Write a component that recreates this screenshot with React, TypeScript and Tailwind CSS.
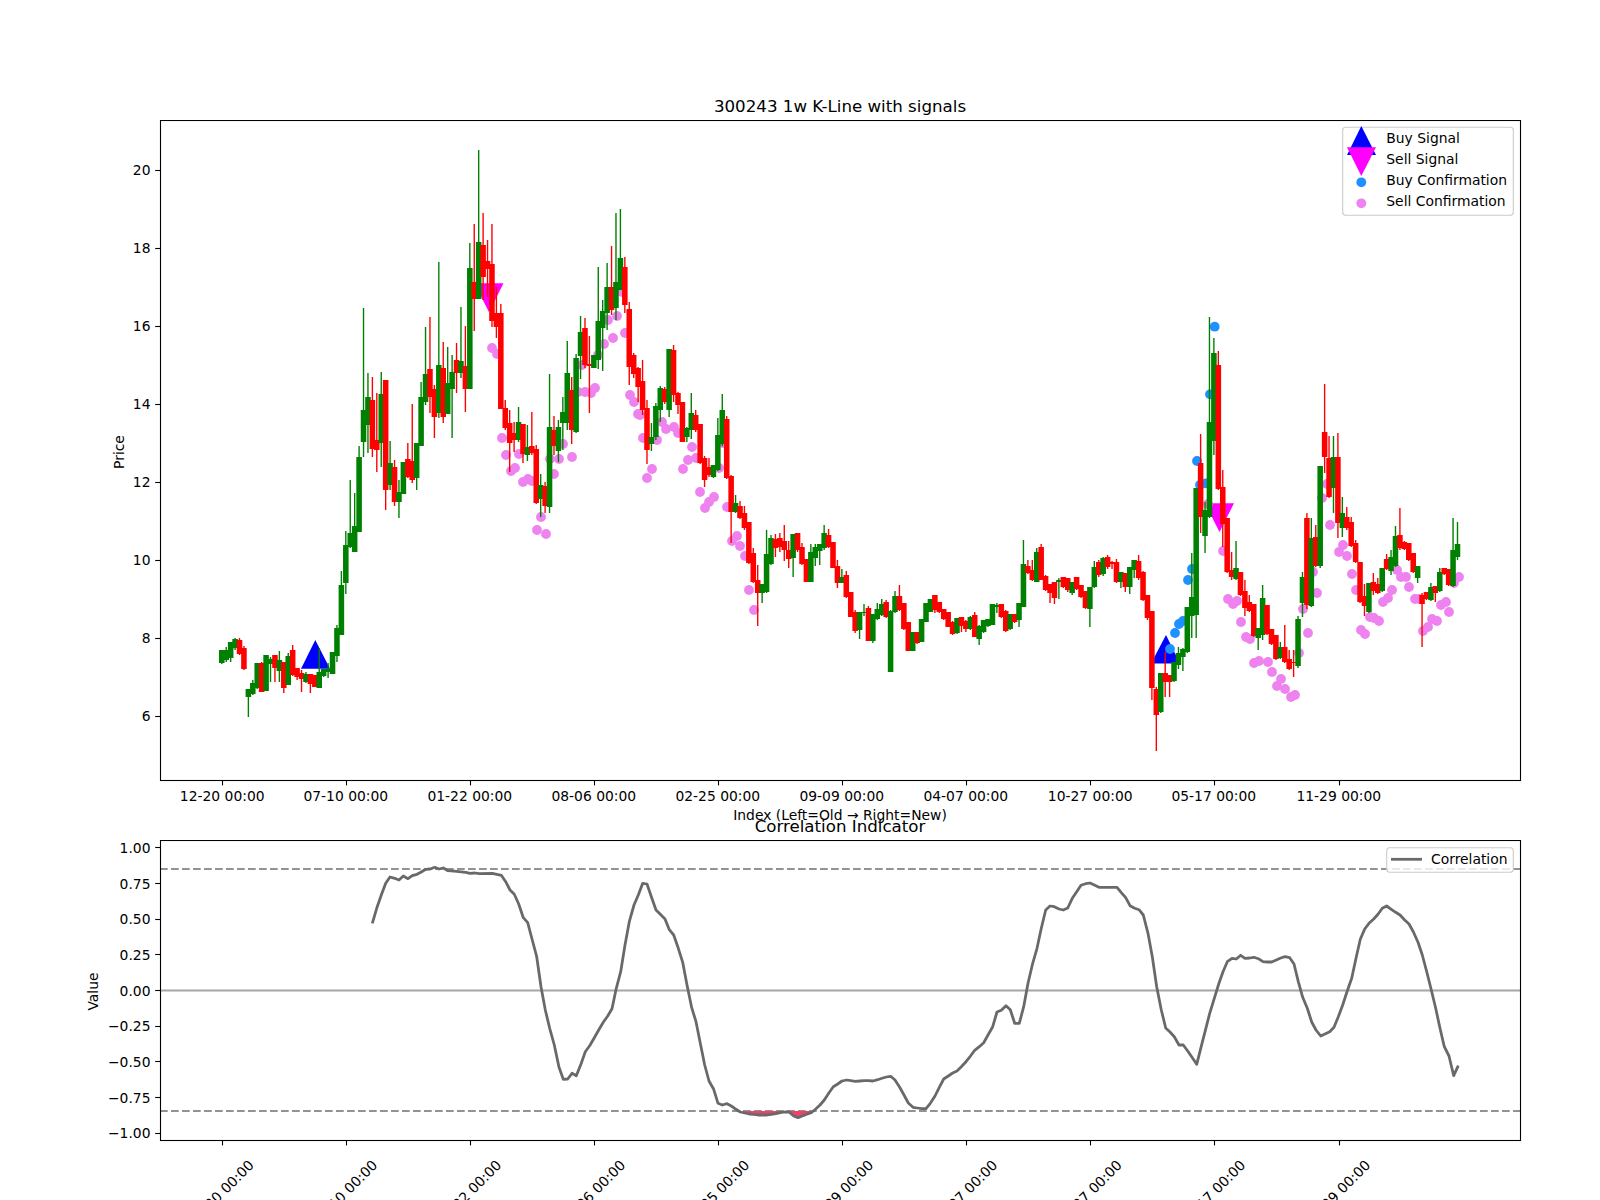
const xAt = (i: number) => 221.8 + 4.429 * i;
const snap = (v: number) => Math.floor(v) + 0.5;

const TICKS = [
  ['12-20 00:00', 222.7], ['07-10 00:00', 346.3], ['01-22 00:00', 470.3], ['08-06 00:00', 594.3], ['02-25 00:00', 718.3],
  ['09-09 00:00', 842.3], ['04-07 00:00', 966.3], ['10-27 00:00', 1090.7], ['05-17 00:00', 1214.3], ['11-29 00:00', 1339.3],
] as const;

const PRICE_TICKS = [[20, 170.3], [18, 248.3], [16, 326.3], [14, 404.3], [12, 482.3], [10, 560.3], [8, 638.3], [6, 716.3]] as const;
const VALUE_TICKS = [['1.00', 847.7], ['0.75', 883.5], ['0.50', 919.2], ['0.25', 954.9], ['0.00', 990.5], ['−0.25', 1026.2], ['−0.50', 1061.9], ['−0.75', 1097.6], ['−1.00', 1133.3]] as const;

// color, wick top, body top, body bottom, wick bottom (page px)
type Candle = ['g' | 'r', number, number, number, number];
const CANDLES: Candle[] = [
  ['g',650,650,663,664],['g',647,650,660,662],['g',642,642,658,662],['g',638,639,648,650],['r',638,640,654,655],
  ['r',646,648,669,670],['g',689,689,697,717],['g',680,683,694,695],['g',663,663,688,689],['r',662,663,692,692],
  ['g',655,655,691,691],['g',657,659,664,682],['r',655,655,668,682],['g',651,660,671,682],['r',662,662,688,693],
  ['g',653,656,685,685],['r',645,650,675,676],['r',668,668,677,680],['r',670,673,679,692],['g',672,674,682,683],
  ['r',674,674,684,693],['r',675,675,687,687],['g',648,672,688,688],['g',669,669,676,677],['g',663,669,672,678],
  ['g',652,652,674,674],['g',625,628,656,662],['g',571,585,635,635],['g',531,545,583,594],['g',480,533,547,548],
  ['g',493,526,552,552],['g',446,457,532,532],['g',308,410,442,457],['g',373,397,425,453],['r',377,400,449,457],
  ['r',393,440,450,472],['g',372,394,443,467],['r',380,380,490,510],['g',441,463,485,490],['r',460,467,502,506],
  ['g',480,492,502,518],['g',462,462,494,494],['r',443,459,477,478],['r',404,461,480,483],['g',443,443,478,490],
  ['g',382,397,446,446],['g',327,374,402,405],['r',317,369,397,413],['r',385,389,417,438],['g',262,365,413,418],
  ['r',342,368,417,423],['g',347,383,414,414],['g',355,372,389,438],['r',343,360,373,393],['g',307,361,373,378],
  ['r',326,366,389,412],['g',243,268,389,389],['r',224,282,299,331],['g',150,242,299,299],['r',213,245,277,300],
  ['r',240,261,269,297],['r',224,264,321,327],['r',287,313,327,338],['r',304,313,409,409],['r',400,408,428,430],
  ['r',410,423,443,472],['r',422,433,440,452],['g',407,422,440,442],['r',424,424,454,463],['g',425,447,455,461],
  ['r',412,446,453,455],['r',445,449,503,504],['g',474,485,499,517],['r',482,486,506,513],['g',374,427,507,513],
  ['r',416,430,446,455],['g',420,427,451,462],['g',397,412,423,450],['g',341,373,423,430],['r',377,390,430,444],
  ['g',354,358,432,433],['g',316,332,356,379],['r',318,328,365,368],['r',336,364,366,413],['g',355,355,368,368],
  ['g',267,321,360,369],['g',300,311,328,371],['g',263,287,313,330],['r',246,287,310,315],['g',213,282,308,320],
  ['g',209,258,290,290],['r',257,267,305,313],['r',302,309,367,385],['r',353,355,374,378],['r',367,368,387,402],
  ['r',360,381,410,415],['r',400,408,450,464],['g',423,437,444,451],['g',403,406,437,440],['g',386,388,410,422],
  ['r',387,389,402,404],['g',349,349,410,417],['r',345,350,395,402],['r',392,393,405,414],['r',402,402,442,442],
  ['g',427,428,437,442],['g',393,413,430,439],['r',410,415,430,432],['r',424,424,463,464],['r',456,458,480,487],
  ['r',458,467,475,477],['g',465,465,477,478],['g',418,435,470,471],['g',394,410,444,446],['r',416,419,478,479],
  ['r',475,476,512,543],['g',495,503,512,513],['r',501,506,518,519],['r',506,513,528,530],['r',522,522,563,564],
  ['r',548,553,582,583],['r',565,580,593,626],['g',584,584,593,603],['g',530,554,592,593],['g',535,538,564,565],
  ['r',534,539,548,557],['r',533,538,547,552],['r',525,541,550,561],['r',541,550,559,568],['g',534,534,558,577],
  ['r',533,533,550,552],['r',543,547,564,565],['r',559,559,582,582],['g',544,552,582,582],['g',544,547,558,566],
  ['g',544,544,551,565],['g',525,533,548,550],['r',529,535,547,548],['r',542,542,568,568],['r',560,566,583,588],
  ['g',569,577,583,583],['r',571,575,597,598],['r',592,592,617,617],['r',610,612,631,633],['g',612,612,630,639],
  ['g',604,612,613,616],['r',606,608,641,641],['g',614,614,641,643],['g',603,609,619,620],['g',599,604,615,616],
  ['r',600,602,617,618],['g',610,611,672,672],['g',591,596,612,613],['r',585,596,610,611],['r',603,603,629,630],
  ['r',622,622,651,651],['g',632,632,651,651],['r',632,632,643,644],['g',619,619,642,642],['g',603,603,622,622],
  ['g',599,599,612,612],['r',595,595,610,613],['r',602,602,612,613],['r',609,609,619,620],['r',612,612,627,620],
  ['r',621,622,634,635],['g',618,618,633,634],['r',617,617,626,632],['r',620,621,629,632],['g',616,617,629,630],
  ['r',612,615,637,637],['g',625,626,639,645],['g',620,620,632,633],['g',619,619,626,627],['g',604,604,625,625],
  ['g',603,605,607,613],['r',604,604,617,618],['r',610,611,631,632],['g',614,614,629,630],['r',614,614,622,623],
  ['g',603,603,620,627],['g',540,564,607,607],['r',560,566,573,574],['r',560,570,580,581],['g',548,552,582,582],
  ['r',544,547,580,580],['r',575,576,590,591],['r',584,584,593,603],['r',582,582,598,604],['g',578,580,582,599],
  ['r',577,577,587,588],['r',578,578,590,592],['g',582,582,593,595],['r',577,577,589,590],['r',585,585,597,598],
  ['r',591,591,608,609],['g',587,587,609,627],['g',561,567,587,588],['r',560,562,575,577],['g',557,558,574,576],
  ['r',555,557,567,569],['r',561,562,564,569],['r',559,562,582,583],['g',572,572,582,588],['r',573,573,587,592],
  ['g',567,567,587,594],['g',560,560,570,578],['r',555,561,578,580],['r',571,572,600,601],['r',595,595,618,620],
  ['r',611,611,688,700],['r',687,689,715,751],['g',673,673,712,713],['r',652,673,682,697],['r',675,675,682,697],
  ['g',662,662,681,682],['g',647,653,665,669],['g',648,649,657,671],['g',607,607,652,653],['g',553,597,616,638],
  ['g',488,488,615,638],['r',434,463,517,533],['g',502,510,536,553],['g',317,422,517,518],['g',338,353,441,455],
  ['r',351,365,489,490],['r',470,487,524,547],['r',518,518,572,573],['r',552,570,577,580],['g',541,568,579,580],
  ['r',572,572,595,596],['r',580,591,608,616],['r',595,602,611,612],['r',604,604,636,637],['g',628,628,638,650],
  ['g',585,598,635,640],['r',605,605,634,635],['r',629,629,644,645],['r',635,635,659,660],['g',642,647,658,659],
  ['r',625,647,662,663],['r',650,659,669,670],['r',650,662,663,677],['g',616,619,666,668],['g',572,577,603,617],
  ['r',513,518,605,609],['g',518,538,606,607],['r',525,537,566,567],['g',466,466,566,568],['r',384,432,457,473],
  ['r',436,458,497,498],['g',436,457,488,513],['r',433,457,523,538],['g',497,513,528,537],['r',507,517,528,530],
  ['r',517,522,546,547],['r',540,543,562,563],['r',562,562,602,603],['r',584,596,606,616],['g',583,583,612,613],
  ['r',573,582,591,595],['r',578,584,593,594],['g',568,568,591,592],['r',554,559,569,570],['g',550,557,571,575],
  ['g',526,536,566,567],['r',508,535,548,550],['r',541,542,549,550],['r',543,543,560,561],['r',553,553,572,573],
  ['g',566,566,578,583],['r',593,595,604,647],['r',592,592,599,600],['g',583,587,600,601],['r',586,586,593,602],
  ['g',568,572,591,592],['r',568,568,574,575],['r',569,569,585,586],['g',518,550,586,587],['g',522,544,557,560],
];

// sell confirmation dots, page px
const SELL: [number, number][] = [
  [492,348],[497,354],[502,438],[506,455],[519,454],[511,471],[515,468],[523,482],[528,479],[532,481],
  [537,530],[546,534],[541,517],[550,459],[559,459],[563,444],[554,474],[572,457],
  [582,365],[578,392],[585,392],[591,393],[595,388],[598,355],[604,344],[608,320],[613,338],[617,316],[625,333],[622,292],
  [630,395],[634,402],[638,414],[643,438],[647,478],[652,469],[640,415],[657,440],[662,422],[666,429],
  [674,427],[678,433],[683,469],[688,460],[692,447],[696,458],[700,492],[705,508],[709,502],[714,497],
  [719,468],[723,443],[727,507],[732,541],[737,536],[740,546],[745,556],[749,590],[754,610],
  [1223,551],[1228,599],[1233,604],[1237,601],[1241,622],[1246,637],[1250,639],[1254,663],[1259,661],
  [1268,662],[1272,672],[1281,679],[1277,686],[1285,689],[1291,697],[1295,695],[1299,653],[1308,633],
  [1303,609],[1317,593],[1313,572],[1322,498],[1327,484],[1330,525],[1343,545],[1339,552],[1347,556],
  [1352,574],[1356,590],[1370,617],[1374,618],[1379,621],[1361,630],[1365,634],[1383,602],[1388,598],
  [1392,590],[1397,570],[1401,577],[1406,577],[1409,587],[1415,599],[1419,599],[1441,605],[1446,602],
  [1449,612],[1432,619],[1437,621],[1428,627],[1423,631],[1454,583],[1459,577],[1208,504],
];

const BUY: [number, number][] = [
  [1214.7,326.7],[1210,394.3],[1197,461],[1206,483.3],[1200,485],[1192,569],[1188,580],[1183,621],[1179,624],[1175,633],[1170,649],
];

// correlation line, one point per candle from index 34
const Z6: [number, number][] = [[937,430],[950,385],[964,345],[977,310],[990,291],[1004,295],[1017,300],[1030,288],[1044,296],[1057,287],[1071,283],[1084,276],[1097,268],[1111,267],[1124,262],[1137,267],[1150,264],[1164,272],[1190,274],[1217,277],[1230,280],[1245,279],[1258,281],[1297,280],[1324,286],[1337,305],[1350,330],[1363,343],[1376,372],[1390,413],[1403,428],[1416,477],[1430,530],[1443,620],[1456,690],[1469,745],[1483,795]];
const Z7: [number, number][] = [[27,862],[40,898],[53,897],[66,880],[79,887],[93,852],[106,815],[120,796],[133,773],[146,750],[160,727],[173,708],[186,686],[199,625],[212,575],[225,495],[238,425],[252,375],[265,345],[278,310],[291,312],[305,353],[318,390],[331,403],[345,417],[358,449],[371,465],[385,505],[398,547],[411,615],[425,683],[438,725],[451,790],[464,855],[477,903],[491,928],[504,970],[517,975],[531,971],[544,978],[558,988],[571,996],[584,999],[598,1002],[611,1003],[624,1005],[638,1005],[651,1005],[664,1003],[678,1001],[691,998],[704,996],[717,996],[731,1008],[744,1013],[757,1008],[770,1003],[784,998],[797,987],[810,975],[823,960],[837,938],[850,920],[863,912],[876,903],[890,900],[903,902],[916,904],[930,903],[943,902],[956,902],[969,903],[983,899],[996,895],[1009,891],[1022,889],[1035,900],[1049,922],[1062,945],[1075,969],[1089,982],[1102,984],[1115,986],[1128,986],[1141,970],[1155,948],[1168,922],[1181,897],[1195,888],[1208,879],[1221,873],[1234,860],[1248,845],[1261,829],[1274,811],[1288,800],[1301,788],[1314,765],[1328,740],[1341,696],[1354,691],[1368,677],[1381,689],[1394,730],[1408,730],[1421,680],[1434,610],[1448,550],[1461,505],[1474,445],[1487,390]];
const Z8: [number, number][] = [[30,378],[43,380],[57,387],[70,390],[83,384],[97,355],[110,335],[123,316],[137,311],[150,309],[163,315],[177,322],[190,322],[217,322],[231,322],[244,338],[257,353],[270,377],[284,385],[297,389],[310,405],[324,460],[337,530],[350,620],[364,690],[377,744],[390,756],[403,770],[417,795],[430,795],[443,813],[456,832],[470,853],[483,802],[496,752],[509,700],[523,655],[536,612],[549,575],[562,545],[576,535],[589,537],[602,526],[615,535],[629,534],[642,532],[655,536],[669,545],[682,546],[695,546],[709,540],[722,534],[735,530],[749,533],[762,552],[775,605],[788,652],[802,685],[815,726],[828,750],[842,768],[855,762],[869,755],[882,742],[895,710],[908,675],[921,635],[935,595],[948,535],[961,478],[974,447],[987,430],[1001,417],[1014,403],[1027,385],[1040,378],[1054,388],[1067,397],[1080,405],[1094,420],[1107,432],[1120,455],[1134,487],[1147,525],[1160,575],[1174,630],[1187,685],[1200,745],[1213,800],[1227,828],[1241,887],[1255,857]];

const toPts = (pts: [number, number][], ox: number) => pts.map(([x, y]) => `${(ox + x / 3).toFixed(1)},${(780 + y / 3).toFixed(1)}`).join(' ');
const CORR = [toPts(Z6, 60), toPts(Z7, 550), toPts(Z8, 1040)].join(' ');
const FILLED = toPts([[575,993],[584,999],[598,1002],[611,1003],[624,1005],[638,1005],[651,1005],[664,1003],[678,1001],[691,998],[704,996],[717,996],[731,1008],[744,1013],[757,1008],[770,1003],[784,998],[792,993]], 550);

function Frame({ top, bottom }: { top: number; bottom: number }) {
  return (
    <g>
      <rect x={160.5} y={top + 0.5} width={1360} height={bottom - top} fill="none" stroke="#000" strokeWidth={1.1} />
      {TICKS.map(([, x]) => (
        <line key={x} x1={snap(x)} x2={snap(x)} y1={bottom} y2={bottom + 5.4} stroke="#000" strokeWidth={1.1} />
      ))}
    </g>
  );
}

function YTicks({ ticks }: { ticks: readonly (readonly [number | string, number])[] }) {
  return (
    <g>
      {ticks.map(([label, y]) => (
        <g key={y}>
          <line x1={155.2} x2={160} y1={snap(y)} y2={snap(y)} stroke="#000" strokeWidth={1.1} />
          <text x={150.5} y={y + 5} textAnchor="end" className="fill-black text-[13.89px]">{label}</text>
        </g>
      ))}
    </g>
  );
}

function PriceChart() {
  return (
    <svg width={1600} height={690} viewBox="0 120 1600 690" className="block">
      <polygon points="315.3,640 301,668.7 330,668.7" fill="#0000ff" />
      <polygon points="1166,635 1151,663.5 1180,663.5" fill="#0000ff" />
      <polygon points="474.5,283.3 503.5,283.3 489,312.3" fill="#ff00ff" />
      <polygon points="1205,503.3 1234,503.3 1219.5,532" fill="#ff00ff" />
      {BUY.map(([x, y]) => <circle key={`${x}-${y}`} cx={x} cy={y} r={4.9} fill="#1e90ff" />)}
      {SELL.map(([x, y]) => <circle key={`${x}-${y}`} cx={x} cy={y} r={4.9} fill="#ee82ee" />)}
      {CANDLES.map(([c, wt, bt, bb, wb], i) => {
        const color = c === 'g' ? '#008000' : '#ff0000';
        const x = xAt(i);
        return (
          <g key={i}>
            <line x1={x} x2={x} y1={wt} y2={wb} stroke={color} strokeWidth={1.39} />
            <line x1={x} x2={x} y1={bt} y2={bb} stroke={color} strokeWidth={5.55} />
          </g>
        );
      })}
      <Frame top={120} bottom={780} />
      <YTicks ticks={PRICE_TICKS} />
      {TICKS.map(([label, x]) => (
        <text key={label} x={x - 0.5} y={801} textAnchor="middle" className="fill-black text-[13.89px]">{label}</text>
      ))}
      <text x={119} y={452} textAnchor="middle" dominantBaseline="central" transform="rotate(-90 119 452)" className="fill-black text-[13.89px]">Price</text>

      {/* legend */}
      <rect x={1342.7} y={127.3} width={170.6} height={88} rx={3} fill="#fff" fillOpacity={0.8} stroke="#ccc" strokeWidth={1.1} />
      <polygon points="1361.3,126 1347,155 1376,155" fill="#0000ff" />
      <polygon points="1347,147.3 1376,147.3 1361.3,176" fill="#ff00ff" />
      <circle cx={1361.3} cy={182.3} r={4.9} fill="#1e90ff" />
      <circle cx={1361.3} cy={203.3} r={4.9} fill="#ee82ee" />
      {[['Buy Signal', 142.8], ['Sell Signal', 163.8], ['Buy Confirmation', 185], ['Sell Confirmation', 206]].map(([t, y]) => (
        <text key={t} x={1386.3} y={y} className="fill-black text-[13.89px]">{t}</text>
      ))}
    </svg>
  );
}

function CorrelationChart() {
  return (
    <svg width={1600} height={360} viewBox="0 840 1600 360" className="block">
      <line x1={160} x2={1520} y1={990.5} y2={990.5} stroke="#a6a6a6" strokeWidth={2.08} />
      <line x1={160} x2={1520} y1={869} y2={869} stroke="#929292" strokeWidth={2.08} strokeDasharray="7.7 3.3" />
      <line x1={160} x2={1520} y1={1111} y2={1111} stroke="#929292" strokeWidth={2.08} strokeDasharray="7.7 3.3" />
      <polygon points={FILLED} fill="#e8446c" />
      <polyline points={CORR} fill="none" stroke="#696969" strokeWidth={2.78} strokeLinejoin="round" />
      <Frame top={840} bottom={1140} />
      <YTicks ticks={VALUE_TICKS} />
      {TICKS.map(([label, x]) => (
        <text key={label} x={x - 1.5} y={1192.5} textAnchor="middle" dominantBaseline="central" transform={`rotate(-45 ${x - 1.5} 1192.5)`} className="fill-black text-[13.89px]">{label}</text>
      ))}
      <text x={93} y={991.5} textAnchor="middle" dominantBaseline="central" transform="rotate(-90 93 991.5)" className="fill-black text-[13.89px]">Value</text>

      {/* legend */}
      <rect x={1386.7} y={847.7} width={126.6} height={24.6} rx={3} fill="#fff" fillOpacity={0.8} stroke="#ccc" strokeWidth={1.1} />
      <line x1={1391} x2={1422} y1={859.3} y2={859.3} stroke="#696969" strokeWidth={2.78} />
      <text x={1431} y={864.3} className="fill-black text-[13.89px]">Correlation</text>
    </svg>
  );
}

export default function App() {
  return (
    <div className="w-[1600px] h-[1200px] overflow-hidden bg-white text-black font-['DejaVu_Sans',sans-serif]">
      <div className="h-[120px] ml-[160px] w-[1360px] flex items-end justify-center pb-[3px]">
        <h1 className="text-[16.67px] leading-[20px] font-normal">300243 1w K-Line with signals</h1>
      </div>
      <PriceChart />
      <div className="h-[30px] ml-[160px] w-[1360px] grid justify-items-center">
        <span className="[grid-area:1/1] self-start text-[13.89px] leading-[16px] -mt-[3px]">Index (Left=Old → Right=New)</span>
        <h2 className="[grid-area:1/1] self-end text-[16.67px] leading-[20px] font-normal mb-[3px]">Correlation Indicator</h2>
      </div>
      <CorrelationChart />
    </div>
  );
}
